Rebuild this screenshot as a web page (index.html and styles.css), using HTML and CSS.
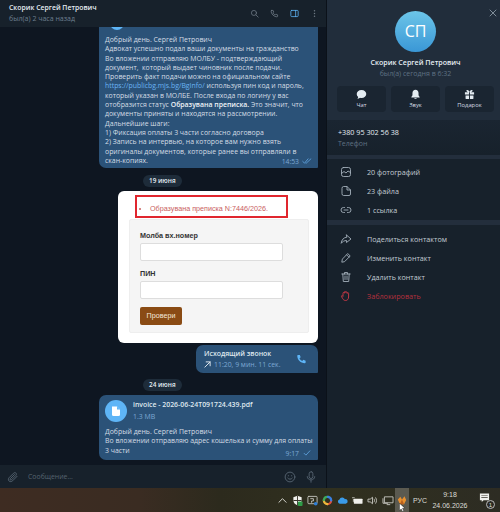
FILE: index.html
```html
<!DOCTYPE html>
<html lang="ru">
<head>
  <meta charset="UTF-8" />
  <title>Скорик Сергей Петрович</title>
  <link rel="stylesheet" href="styles.css">
</head>
<body>
  <div class="window">
    <section class="chat">
      <header class="chat-top">
        <div class="chat-title">
          <div class="chat-name">Скорик Сергей Петрович</div>
          <div class="chat-status">был(а) 2 часа назад</div>
        </div>
        <div class="chat-tools">
          <svg class="tool" viewBox="0 0 16 16"><circle cx="7" cy="7" r="4.5"/><path d="M10.5 10.5 14.5 14.5"/></svg>
          <svg class="tool" viewBox="0 0 16 16"><path d="M3 2.5h2.5l1.2 3-1.600 1.300c.8 1.800 2.200 3.200 4 4l1.400-1.600 3 1.200v2.500c0 .6-.5 1.100-1.100 1.100C7 14 2 9 1.900 3.600c0-.6.500-1.100 1.100-1.100z"/></svg>
          <svg class="tool tool-on" viewBox="0 0 16 16"><rect x="1.5" y="2.5" width="13" height="11" rx="1.5"/><path d="M10 2.5v11"/></svg>
          <svg class="tool" viewBox="0 0 16 16"><circle class="dot" cx="8" cy="3" r="1.3"/><circle class="dot" cx="8" cy="8" r="1.3"/><circle class="dot" cx="8" cy="13" r="1.3"/></svg>
        </div>
      </header>

      <div class="messages">
        <div class="bubble bubble-long">
          <div class="clipped"><span class="clipped-icon"></span></div>
          <p>Добрый день. Сергей Петрович<br>
          Адвокат успешно подал ваши документы на гражданство<br>
          Во вложении отправляю МОЛБУ - подтверждающий<br>
          документ,&nbsp; который выдает чиновник после подачи.<br>
          Проверить факт подачи можно на официальном сайте<br>
          <a href="#">https://publicbg.mjs.bg/BgInfo/</a> используя пин код и пароль,<br>
          который указан в МОЛБЕ. После входа по логину у вас<br>
          отобразится статус <b>Образувана преписка.</b> Это значит, что<br>
          документы приняты и находятся на рассмотрении.<br>
          Дальнейшие шаги:<br>
          1) Фиксация оплаты 3 части согласно договора<br>
          2) Запись на интервью, на которое вам нужно взять<br>
          оригиналы документов, которые ранее вы отправляли в<br>
          скан-копиях.</p>
          <div class="meta"><span>14:53</span>
            <svg class="ticks" viewBox="0 0 14 8"><path d="M1 4.500 3.500 7 8.500 1M5.500 7 6 7 12.500 1"/></svg>
          </div>
        </div>

        <div class="date">19 июня</div>

        <div class="photo">
          <div class="alert"><ul><li>Образувана преписка N:7446/2026.</li></ul></div>
          <div class="panel">
            <label class="field-label">Молба вх.номер</label>
            <div class="field"></div>
            <label class="field-label">ПИН</label>
            <div class="field"></div>
            <div class="check-btn">Провери</div>
          </div>
        </div>

        <div class="bubble bubble-call">
          <div>
            <div class="call-title">Исходящий звонок</div>
            <div class="call-info"><svg class="call-arrow" viewBox="0 0 8 8"><path d="M1 7 7 1M2.500 1H7V5.500"/></svg>11:20, 9 мин. 11 сек.</div>
          </div>
          <svg class="call-phone" viewBox="0 0 16 16"><path d="M3 1.500h2.600l1.200 3.400-1.700 1.300c.8 1.900 2.200 3.300 4 4l1.500-1.700 3.400 1.200v2.600c0 .7-.6 1.200-1.200 1.200C6.800 13.500 2 8.700 1.800 2.700c0-.6.500-1.200 1.200-1.200z"/></svg>
        </div>

        <div class="date">24 июня</div>

        <div class="bubble bubble-doc">
          <div class="doc">
            <div class="doc-icon">
              <svg viewBox="0 0 12 12"><path d="M2 1.500h5l3 3v5a1.500 1.500 0 0 1-1.500 1.500h-5A1.500 1.500 0 0 1 2 9.500z"/><path class="fold" d="M7 1.500v3h3"/></svg>
            </div>
            <div>
              <div class="doc-name">invoice - 2026-06-24T091724.439.pdf</div>
              <div class="doc-size">1.3 MB</div>
            </div>
          </div>
          <p>Добрый день. Сергей Петрович<br>
          Во вложении отправляю адрес кошелька и сумму для оплаты<br>
          3 части</p>
          <div class="meta"><span>9:17</span>
            <svg class="ticks" viewBox="0 0 14 8"><path d="M3 4.500 5.500 7 11 1"/></svg>
          </div>
        </div>
      </div>

      <footer class="composer">
        <svg class="comp-icon" viewBox="0 0 16 16"><path d="M13.500 7 7.500 13c-1.500 1.500-3.700 1.500-4.800.3-1.200-1.200-1.100-3.200.3-4.600l5.700-5.700c1-1 2.400-1 3.200-.2.900.9.800 2.200-.2 3.200L6 11.700c-.5.500-1.200.5-1.600.1-.4-.4-.4-1.100.1-1.600L10 4.700"/></svg>
        <span class="comp-text">Сообщение...</span>
        <svg class="comp-icon comp-smile" viewBox="0 0 16 16"><circle cx="8" cy="8" r="6.500"/><path d="M5 9.500c1.500 2 4.500 2 6 0"/><circle class="dot" cx="5.800" cy="6.300" r=".8"/><circle class="dot" cx="10.200" cy="6.300" r=".8"/></svg>
        <svg class="comp-icon" viewBox="0 0 16 16"><rect x="5.500" y="1" width="5" height="9" rx="2.500"/><path d="M3 7.500c0 6 10 6 10 0M8 12.500V15"/></svg>
      </footer>
    </section>

    <aside class="profile">
      <div class="profile-top">
        <svg class="close" viewBox="0 0 8 8"><path d="M1 1 7 7M7 1 1 7"/></svg>
        <div class="avatar">СП</div>
        <div class="profile-name">Скорик Сергей Петрович</div>
        <div class="profile-status">был(а) сегодня в 6:32</div>
        <div class="actions">
          <div class="action">
            <svg viewBox="0 0 12 12"><path class="solid" d="M6 1C2.900 1 .8 3 .8 5.400c0 1.300.6 2.400 1.600 3.200 0 .8-.5 1.500-1 2 1.200 0 2.200-.4 3-1 .5.100 1 .2 1.600.2 3.100 0 5.200-2 5.200-4.400S9.100 1 6 1z"/></svg>
            <span>Чат</span>
          </div>
          <div class="action">
            <svg viewBox="0 0 12 12"><path class="solid" d="M6 .8c-2 0-3.300 1.500-3.300 3.500v2.400L1.500 8.600v.7h9v-.7L9.300 6.700V4.300C9.300 2.300 8 .8 6 .8zM4.600 10a1.500 1.500 0 0 0 2.800 0z"/></svg>
            <span>Звук</span>
          </div>
          <div class="action">
            <svg viewBox="0 0 12 12"><path class="solid" d="M1 3.500h4.500V6H1zM6.500 3.500H11V6H6.500zM1.700 7h3.800v4H2.700a1 1 0 0 1-1-1zM6.500 7h3.800v3a1 1 0 0 1-1 1H6.500zM3 1.200c1-.7 2.500.3 3 2.200 .5-1.900 2-2.900 3-2.200.8.700.2 2.300-1.500 2.300h-3C2.800 3.500 2.200 1.900 3 1.200z"/></svg>
            <span>Подарок</span>
          </div>
        </div>
      </div>

      <div class="info">
        <div class="phone">+380 95 302 56 38</div>
        <div class="phone-label">Телефон</div>
      </div>

      <div class="menu">
        <div class="menu-row">
          <svg viewBox="0 0 12 12"><rect x="1.500" y="1.500" width="9" height="9" rx="2"/><path d="M1.500 7.500 4 5.500l2 1.500 2-2 2.500 1.500"/></svg>
          <span>20 фотографий</span>
        </div>
        <div class="menu-row">
          <svg viewBox="0 0 12 12"><path d="M2 3a1.500 1.500 0 0 1 1.500-1.500H7L10.500 5v4A1.500 1.500 0 0 1 9 10.500H3.500A1.500 1.500 0 0 1 2 9zM7 1.500V5h3.500"/></svg>
          <span>23 файла</span>
        </div>
        <div class="menu-row">
          <svg viewBox="0 0 12 12"><path d="M4.500 3.500H3.500a2.500 2.500 0 0 0 0 5h1M7.500 3.500h1a2.500 2.500 0 0 1 0 5h-1M4 6h4"/></svg>
          <span>1 ссылка</span>
        </div>
      </div>

      <div class="menu">
        <div class="menu-row">
          <svg viewBox="0 0 12 12"><path d="M6.500 2 11 6 6.500 9.500V7.500C4.500 7.500 2.500 8.500 1.200 10.300 1.500 7 3.500 4.500 6.500 4.200z"/></svg>
          <span>Поделиться контактом</span>
        </div>
        <div class="menu-row">
          <svg viewBox="0 0 12 12"><path d="M8 1.800 10.200 4 4.500 9.700 1.800 10.200 2.300 7.500zM6.800 3 9 5.200"/></svg>
          <span>Изменить контакт</span>
        </div>
        <div class="menu-row">
          <svg viewBox="0 0 12 12"><path d="M1.800 3h8.400M4.500 3V1.500h3V3M2.800 3l.5 7.500h5.400L9.200 3M5 5v3.500M7 5v3.500"/></svg>
          <span>Удалить контакт</span>
        </div>
        <div class="menu-row menu-danger">
          <svg viewBox="0 0 12 12"><path d="M3 6V3.200a.7.700 0 0 1 1.400 0V2.200a.7.700 0 0 1 1.400 0v.4a.7.700 0 0 1 1.400 0v.8a.7.700 0 0 1 1.400 0V7c0 2-1.200 3.500-3 3.500-1.500 0-2.300-.8-3-2L1.500 6.500c-.4-.7.500-1.300 1-.7z"/></svg>
          <span>Заблокировать</span>
        </div>
      </div>
    </aside>
  </div>

  <div class="taskbar">
    <svg class="tray chevron" viewBox="0 0 10 10"><path d="M1 7 5 3l4 4"/></svg>
    <svg class="tray" viewBox="0 0 12 12"><path class="white" d="M6 .8 10.500 2.500V6c0 2.500-2 4.300-4.500 5.200C3.500 10.300 1.500 8.500 1.500 6V2.500z"/><path class="tray-dark" d="M5.500 1h1v10h-1zM1.500 5.500h9v1h-9z"/><rect class="tray-green" x="6.500" y="7" width="5" height="5" rx="1"/></svg>
    <svg class="tray" viewBox="0 0 12 12"><rect class="outline" x="1" y="1.500" width="10" height="8" rx="1"/><path class="outline" d="M4 4h3v2.500H5V8"/><circle class="tray-blue" cx="9.500" cy="9.500" r="2"/></svg>
    <svg class="tray" viewBox="0 0 12 12"><circle class="ring ring-r" cx="6" cy="6" r="4" stroke-dasharray="6.500 19"/><circle class="ring ring-y" cx="6" cy="6" r="4" stroke-dasharray="6.500 19" stroke-dashoffset="-6.300"/><circle class="ring ring-g" cx="6" cy="6" r="4" stroke-dasharray="6.500 19" stroke-dashoffset="-12.600"/><circle class="ring ring-b" cx="6" cy="6" r="4" stroke-dasharray="6.500 19" stroke-dashoffset="-18.900"/></svg>
    <svg class="tray" viewBox="0 0 12 12"><path class="tray-cloud" d="M3 9.500a2.300 2.300 0 0 1-.3-4.500 3.200 3.200 0 0 1 6-.5A2.500 2.500 0 0 1 9.500 9.500z"/></svg>
    <svg class="tray" viewBox="0 0 12 12"><rect class="white" x="2" y="4" width="9.500" height="5.500" rx=".5"/><path class="outline" d="M.5 3h2M1.500 5v2"/></svg>
    <svg class="tray" viewBox="0 0 12 12"><path class="outline" d="M1.500 4.500H3.500L6 2.500v7L3.500 7.500H1.500zM7.800 4.500c.6 1 .6 2 0 3M9.500 3c1.200 2 1.200 4 0 6"/></svg>
    <svg class="tray tray-wide" viewBox="0 0 12 12"><rect class="outline" x="2.500" y="2" width="9" height="6.500"/><path class="outline" d="M.5 4v5h5M5 10.500h3"/></svg>
    <div class="tray-active">
      <svg viewBox="0 0 12 12"><path class="flame" d="M1 5.500 4 2l2 3.500L9 1.500 11 6 8.500 11H3.500z"/><path class="flame-dark" d="M6 5.500 8.500 11h-5z"/></svg>
      <svg class="cursor" viewBox="0 0 6 9"><path d="M.5.500v7l1.700-1.500L3.500 8.500 4.800 8 3.500 5.300H5.800z"/></svg>
    </div>
    <span class="lang">РУС</span>
    <div class="clock"><div>9:18</div><div>24.06.2026</div></div>
    <div class="notify">
      <svg viewBox="0 0 12 12"><path class="white" d="M1 1.500h10v7.500H5L3 11V9H1z"/><path class="tray-dark" d="M2.500 3.500h7v.7h-7zM2.500 5.500h7v.7h-7z"/></svg>
      <span class="notify-count">1</span>
    </div>
  </div>
</body>
</html>
```

FILE: styles.css
```css
* {
  box-sizing: border-box;
  margin: 0;
  padding: 0;
}

body {
  width: 500px;
  height: 512px;
  display: flex;
  flex-direction: column;
  overflow: hidden;
  background: #0e1621;
  font-family: "Open Sans", sans-serif;
  font-size: 6.9px;
  color: #d5dde5;
}

svg {
  display: block;
  fill: none;
  stroke-linecap: round;
  stroke-linejoin: round;
}

.window {
  flex: 1;
  display: flex;
  min-height: 0;
}

/* chat column */
.chat {
  width: 326px;
  display: flex;
  flex-direction: column;
  background: #0e1621;
}

.chat-top {
  height: 27px;
  flex: none;
  display: flex;
  justify-content: space-between;
  align-items: center;
  padding: 0 7px 0 9px;
  background: #17212b;
  position: relative;
  z-index: 1;
}

.chat-name {
  font-size: 6.9px;
  font-weight: 600;
  color: #e4ecf2;
  line-height: 10px;
}

.chat-status {
  font-size: 7px;
  color: #6d7f8f;
  line-height: 10px;
  margin-top: 1px;
}

.chat-tools {
  display: flex;
  gap: 11px;
  align-items: center;
}

.tool {
  width: 9px;
  height: 9px;
  stroke: #6d7883;
  stroke-width: 1.4;
}

.tool-on {
  stroke: #5eb5f7;
}

.tool .dot {
  fill: #6d7883;
  stroke: none;
}

.messages {
  flex: 1;
  min-height: 0;
  display: flex;
  flex-direction: column;
  align-items: flex-end;
  justify-content: flex-end;
  padding: 0 8px 5px 0;
  overflow: hidden;
}

.bubble {
  background: #2b5278;
  border-radius: 7px 7px 1px 7px;
  position: relative;
  line-height: 9.3px;
  white-space: nowrap;
  flex: none;
}

.bubble-long {
  width: 219px;
  padding: 0 6px 3px;
  border-top-left-radius: 0;
  border-top-right-radius: 0;
}

.clipped {
  height: 4px;
  overflow: hidden;
  margin-bottom: 5px;
}

.clipped-icon {
  display: block;
  width: 14px;
  height: 14px;
  margin: -10px 0 0 5px;
  border-radius: 50%;
  background: #5eb5f7;
}

.bubble a {
  color: #6ab3f3;
  text-decoration: none;
}

.bubble b {
  font-weight: 600;
  color: #eef3f7;
}

.meta {
  position: absolute;
  right: 6px;
  bottom: 2px;
  display: flex;
  align-items: center;
  gap: 3px;
  font-size: 6.8px;
  color: #7da8d3;
}

.ticks {
  width: 10px;
  height: 6px;
  stroke: #6ab3f3;
  stroke-width: 1;
}

.date {
  align-self: flex-start;
  margin: 7px 0 4px 143px;
  padding: 0 6px;
  height: 12px;
  line-height: 12px;
  border-radius: 6px;
  background: #1e2c3a;
  font-size: 6.4px;
  font-weight: 600;
  color: #e4ecf2;
}

.bubble-call + .date {
  margin-top: 6px;
}

/* picture inside the chat */
.photo {
  width: 200px;
  height: 152px;
  flex: none;
  background: #fff;
  border-radius: 6px;
  padding: 4px 9px 10px 11px;
  font-family: "Liberation Sans", sans-serif;
}

.alert {
  width: 153px;
  height: 23px;
  margin-left: 6px;
  border: 2px solid #e0262e;
  color: #c9605e;
  font-size: 7.2px;
  padding-top: 7px;
  line-height: 10px;
}

.alert ul {
  padding-left: 13px;
}

.panel {
  margin-top: 1px;
  height: 114px;
  padding: 11px 10px;
  background: #f5f5f5;
  border: 1px solid #eeeeee;
  border-radius: 2px;
}

.field-label {
  display: block;
  font-size: 7.2px;
  font-weight: 700;
  color: #333;
  line-height: 9px;
  margin-bottom: 3px;
}

.field {
  width: 143px;
  height: 18px;
  background: #fff;
  border: 1px solid #ddd;
  border-radius: 2px;
  margin-bottom: 8px;
}

.check-btn {
  width: 42px;
  height: 18px;
  margin-top: 6px;
  line-height: 18px;
  text-align: center;
  border-radius: 2px;
  background: #8a4b14;
  color: #f5e8da;
  font-size: 7.2px;
}

.bubble-call {
  width: 122px;
  height: 28px;
  margin-top: 2px;
  padding: 0 11px 0 8px;
  display: flex;
  justify-content: space-between;
  align-items: center;
}

.call-title {
  font-weight: 600;
  color: #dfe7ee;
  line-height: 10px;
}

.call-info {
  display: flex;
  align-items: center;
  gap: 3px;
  color: #7da8d3;
  line-height: 11px;
}

.call-arrow {
  width: 7px;
  height: 7px;
  stroke: #dfe7ee;
  stroke-width: 1.1;
}

.call-phone {
  width: 11px;
  height: 11px;
  fill: #5eb5f7;
}

.bubble-doc {
  width: 219px;
  padding: 5px 6px;
}

.doc {
  display: flex;
  align-items: center;
  gap: 6px;
  margin-bottom: 5px;
}

.doc-icon {
  width: 22px;
  height: 22px;
  border-radius: 50%;
  background: #5eb5f7;
  display: flex;
  align-items: center;
  justify-content: center;
}

.doc-icon svg {
  width: 12px;
  height: 12px;
  fill: #fff;
}

.doc-icon .fold {
  fill: #5eb5f7;
}

.doc-name {
  font-weight: 600;
  color: #dfe7ee;
  line-height: 10px;
}

.doc-size {
  color: #7da8d3;
  line-height: 11px;
  margin-top: 1px;
}

.composer {
  height: 23px;
  flex: none;
  display: flex;
  align-items: center;
  gap: 9px;
  padding: 0 9px 0 7px;
  background: #17212b;
}

.comp-icon {
  width: 12px;
  height: 12px;
  stroke: #5d6c79;
  stroke-width: 1.1;
}

.comp-icon .dot {
  fill: #5d6c79;
  stroke: none;
}

.comp-text {
  flex: 1;
  color: #56636f;
}

/* profile column */
.profile {
  width: 174px;
  display: flex;
  flex-direction: column;
  gap: 5px;
  background: #232e3c;
  border-left: 1px solid #0b1119;
}

.profile-top {
  position: relative;
  height: 120px;
  background: #212d3b;
  display: flex;
  flex-direction: column;
  align-items: center;
  padding: 11px 0 0 4px;
}

.close {
  position: absolute;
  top: 9px;
  right: 3px;
  width: 8px;
  height: 8px;
  stroke: #8a97a3;
  stroke-width: .9;
}

.avatar {
  width: 41px;
  height: 41px;
  border-radius: 50%;
  background: linear-gradient(#6cc5e8, #3a97d6);
  color: #fff;
  font-size: 16px;
  line-height: 41px;
  text-align: center;
}

.profile-name {
  margin-top: 5px;
  font-weight: 600;
  font-size: 7.1px;
  line-height: 11px;
  color: #e4ecf2;
}

.profile-status {
  font-size: 7px;
  line-height: 11px;
  color: #5f7183;
}

.actions {
  display: flex;
  gap: 5px;
  margin-top: 7px;
}

.action {
  width: 49px;
  height: 26px;
  border-radius: 4px;
  background: #1a2531;
  display: flex;
  flex-direction: column;
  align-items: center;
  justify-content: center;
  gap: 1px;
  font-size: 5.8px;
  line-height: 8px;
  color: #d5dde5;
}

.action svg {
  width: 11px;
  height: 11px;
}

.action .solid {
  fill: #e4ecf2;
}

.info {
  height: 35px;
  padding: 7px 11px;
  margin-top: -5px;
  margin-bottom: -1px;
  background: linear-gradient(#1a2531, #17212b);
}

.phone {
  font-size: 7.2px;
  line-height: 11px;
  color: #e4ecf2;
}

.phone-label {
  font-size: 7px;
  line-height: 10px;
  margin-top: 1px;
  color: #5f7183;
}

.menu {
  background: #17212b;
  padding: 3px 0 1px;
}

.menu:last-child {
  flex: 1;
  padding-top: 4px;
}

.menu-row {
  height: 19px;
  display: flex;
  align-items: center;
  gap: 15px;
  padding-left: 13px;
  font-size: 7.2px;
  color: #c3ccd4;
}

.menu-row svg {
  width: 12px;
  height: 12px;
  stroke: #a3afba;
  stroke-width: .9;
}

.menu-danger {
  color: #b5303d;
}

.menu-row.menu-danger svg {
  stroke: #d03a48;
}

/* windows taskbar */
.taskbar {
  height: 24px;
  flex: none;
  display: flex;
  align-items: center;
  justify-content: flex-end;
  gap: 4px;
  padding-right: 5px;
  background: linear-gradient(90deg, #3e2c22, #3a2c22 28%, #2c2a1d 44%, #30301f 66%, #2d2c23 100%);
  font-family: "Liberation Sans", sans-serif;
  color: #dcdcd6;
}

.tray {
  width: 11px;
  height: 11px;
}

.tray-wide {
  width: 12px;
}

.chevron {
  width: 9px;
  stroke: #e6e6e0;
  stroke-width: 1;
  margin-right: 1px;
}

.white {
  fill: #f0f0ec;
}

.tray-dark {
  fill: #38352c;
}

.tray-green {
  fill: #2e9b47;
}

.tray-blue {
  fill: #2f7fd6;
}

.tray-cloud {
  fill: #3a9be8;
}

.outline {
  stroke: #d5d5cf;
  stroke-width: .9;
}

.ring {
  stroke-width: 2.4;
}

.ring-r { stroke: #e0503c; }
.ring-y { stroke: #f0b93a; }
.ring-g { stroke: #3fa85a; }
.ring-b { stroke: #3a7fe0; }

.tray-active {
  position: relative;
  width: 14px;
  height: 24px;
  margin-left: -3px;
  background: #5b5a50;
  display: flex;
  align-items: center;
  justify-content: center;
}

.tray-active svg {
  width: 10px;
  height: 10px;
}

.flame {
  fill: #e8902e;
}

.flame-dark {
  fill: #b95f1e;
}

.tray-active .cursor {
  position: absolute;
  left: 4px;
  top: 15px;
  width: 6px;
  height: 9px;
  fill: #fff;
  stroke: #222;
  stroke-width: .4;
}

.lang {
  width: 14px;
  font-size: 7px;
  white-space: nowrap;
}

.clock {
  width: 38px;
  text-align: center;
  font-size: 7px;
  line-height: 11px;
}

.notify {
  position: relative;
  width: 16px;
  height: 18px;
  margin-left: 6px;
}

.notify svg {
  width: 11px;
  height: 11px;
  margin-top: 1px;
}

.notify-count {
  position: absolute;
  right: 0;
  bottom: 0;
  width: 9px;
  height: 9px;
  line-height: 8px;
  border: 1px solid #bbb;
  border-radius: 50%;
  background: #2b2a24;
  text-align: center;
  font-size: 6px;
}
```
